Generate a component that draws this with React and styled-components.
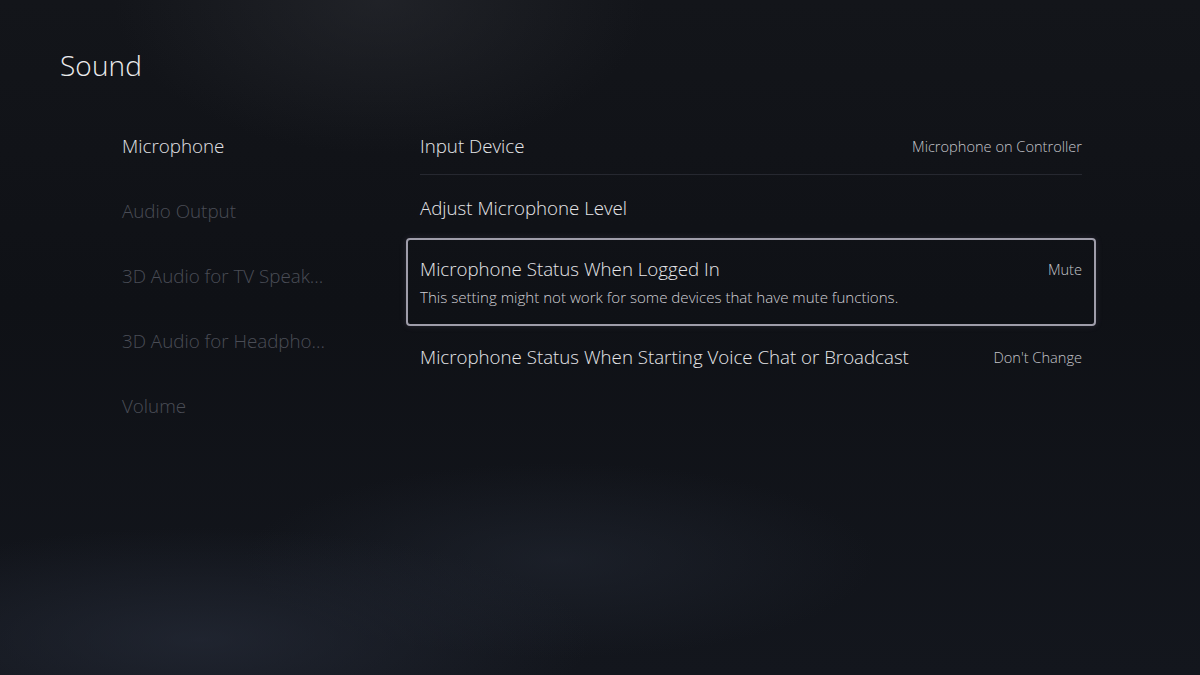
import React from 'react'
import styled, { createGlobalStyle } from 'styled-components'

const GlobalStyle = createGlobalStyle`
  html, body {
    margin: 0;
    padding: 0;
    background: #101217;
  }
  body {
    font-family: 'Open Sans', 'Noto Sans', sans-serif;
  }
`

const navItems = [
  { label: 'Microphone', active: true },
  { label: 'Audio Output' },
  { label: '3D Audio for TV Speak...' },
  { label: '3D Audio for Headpho...' },
  { label: 'Volume' },
]

const settings = [
  { title: 'Input Device', value: 'Microphone on Controller', divider: true },
  { title: 'Adjust Microphone Level' },
  {
    title: 'Microphone Status When Logged In',
    value: 'Mute',
    note: 'This setting might not work for some devices that have mute functions.',
    focused: true,
  },
  { title: 'Microphone Status When Starting Voice Chat or Broadcast', value: "Don't Change" },
]

const App = () => {
  return (
    <>
      <GlobalStyle />
      <Screen>
        <Title>Sound</Title>
        <Body>
          <Nav>
            {navItems.map(item => (
              <NavItem key={item.label} $active={item.active}>{item.label}</NavItem>
            ))}
          </Nav>
          <List>
            {settings.map(row => (
              <Row key={row.title} $focused={row.focused} $divider={row.divider}>
                <RowMain>
                  <RowTitle>{row.title}</RowTitle>
                  {row.value && <RowValue>{row.value}</RowValue>}
                </RowMain>
                {row.note && <RowNote>{row.note}</RowNote>}
              </Row>
            ))}
          </List>
        </Body>
      </Screen>
    </>
  )
}

const Screen = styled.div`
  width: 1200px;
  height: 675px;
  box-sizing: border-box;
  padding: 45px 0 0 60px;
  overflow: hidden;
  color: #e4e4e6;
  background:
    radial-gradient(ellipse 380px 220px at 380px 0px, rgba(48, 50, 56, 0.45), rgba(48, 50, 56, 0) 70%),
    radial-gradient(ellipse 520px 150px at 200px 640px, rgba(40, 46, 60, 0.6), rgba(40, 46, 60, 0) 75%),
    radial-gradient(ellipse 420px 130px at 560px 560px, rgba(36, 42, 54, 0.5), rgba(36, 42, 54, 0) 75%),
    linear-gradient(180deg, #13151a 0%, #0f1116 45%, #13161d 100%);
`

const Title = styled.h1`
  margin: 0;
  font-size: 28px;
  font-weight: 300;
  line-height: 40px;
  color: #ececee;
  letter-spacing: 0.1px;
`

const Body = styled.div`
  display: flex;
  margin-top: 29px;
`

const Nav = styled.nav`
  display: flex;
  flex-direction: column;
  width: 284px;
  margin: -1px 0 0 62px;
`

const NavItem = styled.div`
  height: 65px;
  display: flex;
  align-items: center;
  font-size: 18.8px;
  font-weight: 300;
  white-space: nowrap;
  color: ${p => (p.$active ? '#e2e2e6' : '#4a4d56')};
`

const List = styled.div`
  display: flex;
  flex-direction: column;
  width: 690px;
`

const Row = styled.div`
  display: flex;
  flex-direction: column;
  justify-content: ${p => (p.$focused ? 'flex-start' : 'center')};
  box-sizing: border-box;
  padding: ${p => (p.$focused ? '16px 12px 0' : '0 12px')};
  height: ${p => (p.$focused ? '88px' : p.$divider ? '63px' : '61px')};
  border: 2px solid ${p => (p.$focused ? '#9f9daa' : 'transparent')};
  border-radius: ${p => (p.$focused ? '4px' : '0')};
  position: relative;
  box-shadow: ${p => (p.$focused ? '0 0 6px rgba(130, 115, 150, 0.22)' : 'none')};

  &::after {
    content: '';
    display: ${p => (p.$divider ? 'block' : 'none')};
    position: absolute;
    left: 12px;
    right: 12px;
    bottom: 0;
    height: 1px;
    background: #262830;
  }
`

const RowMain = styled.div`
  display: flex;
  align-items: center;
  justify-content: space-between;
  line-height: 26px;
`

const RowTitle = styled.span`
  font-size: 18.7px;
  font-weight: 300;
  color: #e6e6e9;
`

const RowValue = styled.span`
  font-size: 14.6px;
  font-weight: 300;
  color: #c4c4ca;
`

const RowNote = styled.div`
  margin-top: 5px;
  font-size: 15.1px;
  font-weight: 300;
  line-height: 20px;
  color: #cfcfd4;
`

export default App
